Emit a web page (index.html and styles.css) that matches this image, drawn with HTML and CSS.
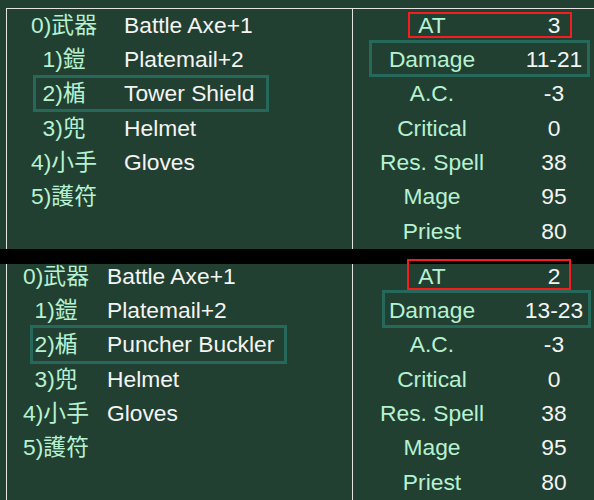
FILE: index.html
```html
<!DOCTYPE html>
<html lang="ja">
<head>
<meta charset="utf-8">
<title>Equipment compare</title>
<link rel="stylesheet" href="styles.css">
</head>
<body>
<div class="screen">
  <section class="panel panel-a">
    <div class="frame">
      <div class="col-equip">
        <ul class="list">
          <li class="row"><span class="slot">0)武器</span><span class="item">Battle Axe+1</span></li>
          <li class="row"><span class="slot">1)鎧</span><span class="item">Platemail+2</span></li>
          <li class="row hl"><span class="slot">2)楯</span><span class="item">Tower Shield</span></li>
          <li class="row"><span class="slot">3)兜</span><span class="item">Helmet</span></li>
          <li class="row"><span class="slot">4)小手</span><span class="item">Gloves</span></li>
          <li class="row"><span class="slot">5)護符</span><span class="item"></span></li>
        </ul>
      </div>
      <div class="col-stats">
        <ul class="list">
          <li class="row hl-red"><span class="stat">AT</span><span class="val">3</span></li>
          <li class="row hl"><span class="stat">Damage</span><span class="val">11-21</span></li>
          <li class="row"><span class="stat">A.C.</span><span class="val">-3</span></li>
          <li class="row"><span class="stat">Critical</span><span class="val">0</span></li>
          <li class="row"><span class="stat">Res. Spell</span><span class="val">38</span></li>
          <li class="row"><span class="stat">Mage</span><span class="val">95</span></li>
          <li class="row"><span class="stat">Priest</span><span class="val">80</span></li>
        </ul>
      </div>
    </div>
  </section>
  <div class="seam"></div>
  <section class="panel panel-b">
    <div class="frame">
      <div class="col-equip">
        <ul class="list">
          <li class="row"><span class="slot">0)武器</span><span class="item">Battle Axe+1</span></li>
          <li class="row"><span class="slot">1)鎧</span><span class="item">Platemail+2</span></li>
          <li class="row hl"><span class="slot">2)楯</span><span class="item">Puncher Buckler</span></li>
          <li class="row"><span class="slot">3)兜</span><span class="item">Helmet</span></li>
          <li class="row"><span class="slot">4)小手</span><span class="item">Gloves</span></li>
          <li class="row"><span class="slot">5)護符</span><span class="item"></span></li>
        </ul>
      </div>
      <div class="col-stats">
        <ul class="list">
          <li class="row hl-red"><span class="stat">AT</span><span class="val">2</span></li>
          <li class="row hl"><span class="stat">Damage</span><span class="val">13-23</span></li>
          <li class="row"><span class="stat">A.C.</span><span class="val">-3</span></li>
          <li class="row"><span class="stat">Critical</span><span class="val">0</span></li>
          <li class="row"><span class="stat">Res. Spell</span><span class="val">38</span></li>
          <li class="row"><span class="stat">Mage</span><span class="val">95</span></li>
          <li class="row"><span class="stat">Priest</span><span class="val">80</span></li>
        </ul>
      </div>
    </div>
  </section>
</div>
</body>
</html>
```

FILE: styles.css
```css
html, body {
  margin: 0;
  padding: 0;
  background: #224031;
}

.screen {
  position: relative;
  width: 594px;
  height: 500px;
  overflow: hidden;
  background: #224031;
  font-family: "Liberation Sans", "Noto Sans CJK JP", sans-serif;
  font-size: 22.8px;
}

.panel {
  box-sizing: border-box;
  height: 251px;
  padding-top: 8px;
}

.panel-b {
  height: 249px;
}

.frame {
  box-sizing: border-box;
  height: 100%;
  margin-left: 6px;
  border-top: 1px solid #e4e4e4;
  border-left: 1px solid #e4e4e4;
  display: grid;
  grid-template-columns: 345px 1fr;
}

.col-stats {
  border-left: 1px solid #e4e4e4;
}

.list {
  list-style: none;
  margin: -1.2px 0 0;
  padding: 0;
}

.row {
  position: relative;
  display: grid;
  height: 34.3px;
  line-height: 34.3px;
  white-space: nowrap;
}

.col-equip .row {
  grid-template-columns: 114px 1fr;
  column-gap: 3px;
}

.panel-b .col-equip .row {
  grid-template-columns: 98px 1fr;
  column-gap: 2px;
}

.col-stats .row {
  grid-template-columns: 158px 80px;
  column-gap: 3px;
}

.slot,
.stat {
  color: #b6f2d2;
  text-align: center;
}

.item {
  color: #f4f4f4;
}

.val {
  color: #f4f4f4;
  text-align: center;
}

.row.hl::after,
.row.hl-red::after {
  content: "";
  position: absolute;
  box-sizing: border-box;
  z-index: 2;
  pointer-events: none;
}

.row.hl::after {
  border: 3px solid #26695a;
}

.row.hl-red::after {
  border: 2.5px solid #f51e1e;
}

/* highlight frames, top panel */
.panel-a .col-equip .hl::after {
  left: 26px;
  top: -1.5px;
  width: 236px;
  height: 37.5px;
}

.panel-a .col-stats .hl-red::after {
  left: 55px;
  top: 4px;
  width: 164px;
  height: 26px;
}

.panel-a .col-stats .hl::after {
  left: 16px;
  top: -2.5px;
  width: 221px;
  height: 37.5px;
}

/* highlight frames, bottom panel */
.panel-b .col-equip .hl::after {
  left: 23px;
  top: -2.5px;
  width: 257px;
  height: 39.5px;
}

.panel-b .col-stats .hl-red::after {
  left: 54px;
  top: 0;
  width: 164px;
  height: 31px;
}

.panel-b .col-stats .hl::after {
  left: 29px;
  top: -3px;
  width: 209px;
  height: 37.5px;
}

.seam {
  position: absolute;
  left: 0;
  right: 0;
  top: 249px;
  height: 15px;
  background: #000;
  z-index: 1;
}
```
